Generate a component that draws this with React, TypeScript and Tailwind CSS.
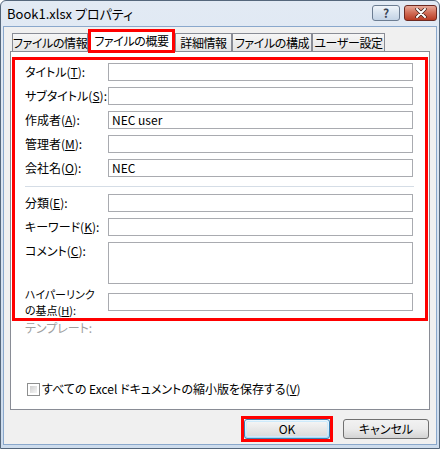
import React from "react";

const font = "[font-family:'Noto_Sans_CJK_JP','Noto_Sans',sans-serif] [font-feature-settings:'palt']";

const Field = ({ value = "", tall = false }: { value?: string; tall?: boolean }) => (
  <div
    className={`w-[305px] ${tall ? "h-[42px]" : "h-[18px]"} border border-[#a9abb0] bg-white px-[3px] text-[12px] leading-[16px] text-black`}
  >
    {value}
  </div>
);

const Row = ({ label, field }: { label: React.ReactNode; field: React.ReactNode }) => (
  <div className="flex items-center">
    <div className="w-[83px] whitespace-nowrap text-[12px] leading-[14px] text-black">{label}</div>
    {field}
  </div>
);

const Tab = ({ label, w }: { label: string; w: string }) => (
  <div
    className={`${w} h-[18px] whitespace-nowrap border border-b-0 border-[#898c95] bg-gradient-to-b from-[#f6f6f6] to-[#e4e4e4] text-center text-[12px] leading-[17px] tracking-[-0.4px] text-black`}
  >
    {label}
  </div>
);

export default function App() {
  return (
    <div className={`${font} w-[440px] h-[449px] flex flex-col border border-[#55677c] rounded-t-[6px] bg-gradient-to-b from-[#e2eaf4] to-[#cddced] px-[2px] pb-[3px]`}>
      {/* title bar */}
      <div className="h-[25px] flex items-start justify-between">
        <div className="pl-[4px] pt-[5px] text-[13px] leading-[16px] text-black">Book1.xlsx プロパティ</div>
        <div className="flex gap-[4px] pt-[4px]">
          <div className="w-[28px] h-[16px] rounded-[3px] border border-[#6c7d92] bg-gradient-to-b from-[#f0f5fa] via-[#d8e3ef] to-[#c3d3e5] flex items-center justify-center text-[12px] font-bold leading-none text-[#3a4656]">
            ?
          </div>
          <div className="w-[33px] h-[16px] rounded-[3px] border border-[#6d2a22] bg-gradient-to-b from-[#e6a898] via-[#d16b55] to-[#b83a22] flex items-center justify-center">
            <svg width="12" height="10" viewBox="0 0 12 10">
              <path d="M2 1 L10 9 M10 1 L2 9" stroke="#3d1b14" strokeWidth="3.4" strokeLinecap="round" />
              <path d="M2 1 L10 9 M10 1 L2 9" stroke="#ffffff" strokeWidth="2" strokeLinecap="round" />
            </svg>
          </div>
        </div>
      </div>

      {/* body */}
      <div className="flex-1 flex flex-col bg-[#f0f0f0] border border-[#8aa8cc]">
        {/* tabs */}
        <div className="mt-[2px] ml-[8px] flex items-end">
          <Tab label="ファイルの情報" w="w-[76px]" />
          <div className="relative z-10 -mb-[2px] w-[87px] h-[24px] whitespace-nowrap border-[3px] border-[#ff0000] bg-white text-center text-[12px] leading-[17px] tracking-[-0.4px] text-black">
            ファイルの概要
          </div>
          <Tab label="詳細情報" w="w-[57px]" />
          <Tab label="ファイルの構成" w="w-[80px]" />
          <Tab label="ユーザー設定" w="w-[73px]" />
        </div>

        {/* tab page */}
        <div className="mx-[6px] h-[359px] flex flex-col border border-[#898c95] bg-white">
          <div className="mt-[5px] mx-[1px] border-[3px] border-[#ff0000] pl-[10px] pr-[11px] pt-[3px] flex flex-col">
            <div className="flex flex-col gap-[6px]">
              <Row label={<>タイトル(<u>T</u>):</>} field={<Field />} />
              <Row label={<>サブタイトル(<u>S</u>):</>} field={<Field />} />
              <Row label={<>作成者(<u>A</u>):</>} field={<Field value="NEC user" />} />
              <Row label={<>管理者(<u>M</u>):</>} field={<Field />} />
              <Row label={<>会社名(<u>O</u>):</>} field={<Field value="NEC" />} />
            </div>
            <div className="mt-[9px] mb-[7px] h-px bg-[#d5dde6]" />
            <div className="flex flex-col gap-[6px]">
              <Row label={<>分類(<u>E</u>):</>} field={<Field />} />
              <Row label={<>キーワード(<u>K</u>):</>} field={<Field />} />
              <div className="flex items-start">
                <div className="w-[83px] pt-[2px] whitespace-nowrap text-[12px] leading-[14px] text-black">
                  コメント(<u>C</u>):
                </div>
                <Field tall />
              </div>
            </div>
            <div className="mt-[2px] flex items-center">
              <div className="w-[83px] whitespace-nowrap text-[11px] leading-[16px] text-black">
                <div>ハイパーリンク</div>
                <div>
                  の基点(<u>H</u>):
                </div>
              </div>
              <Field />
            </div>
          </div>

          <div className="pl-[14px] text-[12px] leading-[14px] text-[#a0a0a0]">テンプレート:</div>

          <div className="flex-1" />

          <div className="pl-[16px] pb-[13px] flex items-center gap-[2px]">
            <div className="w-[13px] h-[13px] border border-[#8e8f8f] bg-white p-[2px]">
              <div className="w-full h-full bg-gradient-to-br from-[#cfcfcf] to-[#f6f6f6]" />
            </div>
            <div className="text-[12px] leading-[14px] text-black">
              すべての Excel ドキュメントの縮小版を保存する(<u>V</u>)
            </div>
          </div>
        </div>

        {/* buttons */}
        <div className="mt-[6px] mr-[7px] flex justify-end items-center gap-[10px]">
          <div className="border-[3px] border-[#ff0000]">
            <div className="w-[86px] h-[20px] rounded-[3px] border border-[#3c7fb1] bg-gradient-to-b from-[#eaf6fd] via-[#d9f0fc] to-[#a7d9f5] p-px">
              <div className="h-full rounded-[2px] border border-[#cdeafb] bg-gradient-to-b from-[#f4f4f4] to-[#dcdcdc] flex items-center justify-center text-[12px] leading-none text-black">
                OK
              </div>
            </div>
          </div>
          <div className="w-[86px] h-[20px] rounded-[3px] border border-[#707070] bg-gradient-to-b from-[#f2f2f2] via-[#ebebeb] to-[#d4d4d4] flex items-center justify-center text-[12px] leading-none text-black">
            キャンセル
          </div>
        </div>
      </div>
    </div>
  );
}
